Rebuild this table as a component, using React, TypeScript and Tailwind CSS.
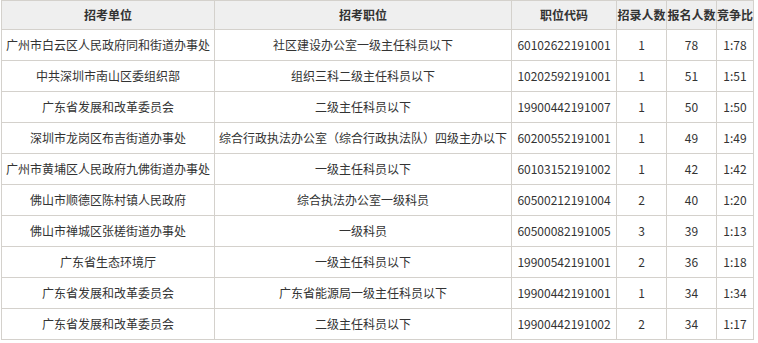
import React from "react";

const rows = [
  ["广州市白云区人民政府同和街道办事处", "社区建设办公室一级主任科员以下", "60102622191001", "1", "78", "1:78"],
  ["中共深圳市南山区委组织部", "组织三科二级主任科员以下", "10202592191001", "1", "51", "1:51"],
  ["广东省发展和改革委员会", "二级主任科员以下", "19900442191007", "1", "50", "1:50"],
  ["深圳市龙岗区布吉街道办事处", "综合行政执法办公室（综合行政执法队）四级主办以下", "60200552191001", "1", "49", "1:49"],
  ["广州市黄埔区人民政府九佛街道办事处", "一级主任科员以下", "60103152191002", "1", "42", "1:42"],
  ["佛山市顺德区陈村镇人民政府", "综合执法办公室一级科员", "60500212191004", "2", "40", "1:20"],
  ["佛山市禅城区张槎街道办事处", "一级科员", "60500082191005", "3", "39", "1:13"],
  ["广东省生态环境厅", "一级主任科员以下", "19900542191001", "2", "36", "1:18"],
  ["广东省发展和改革委员会", "广东省能源局一级主任科员以下", "19900442191001", "1", "34", "1:34"],
  ["广东省发展和改革委员会", "二级主任科员以下", "19900442191002", "2", "34", "1:17"],
];

const headers = ["招考单位", "招考职位", "职位代码", "招录人数", "报名人数", "竞争比"];

export default function App() {
  return (
    <div
      className="w-[758px] h-[343px] bg-white overflow-hidden"
      style={{ fontFamily: '"Noto Sans CJK SC", "Noto Sans", sans-serif' }}
    >
      <table className="ml-px table-fixed border-collapse text-[12px] text-[#333]">
        <colgroup>
          <col className="w-[213px]" />
          <col className="w-[297px]" />
          <col className="w-[105px]" />
          <col className="w-[50px]" />
          <col className="w-[50px]" />
          <col className="w-[37px]" />
        </colgroup>
        <thead>
          <tr className="h-[29px] bg-[#efefef]">
            {headers.map((h) => (
              <th
                key={h}
                className="border border-[#d4d1cc] p-0 text-center font-bold whitespace-nowrap overflow-visible leading-none"
              >
                {h}
              </th>
            ))}
          </tr>
        </thead>
        <tbody>
          {rows.map((r, i) => (
            <tr key={i} className="h-[31px]">
              {r.map((c, j) => (
                <td
                  key={j}
                  className="border border-[#d4d1cc] p-0 text-center whitespace-nowrap overflow-visible leading-none"
                >
                  {c}
                </td>
              ))}
            </tr>
          ))}
        </tbody>
      </table>
    </div>
  );
}
